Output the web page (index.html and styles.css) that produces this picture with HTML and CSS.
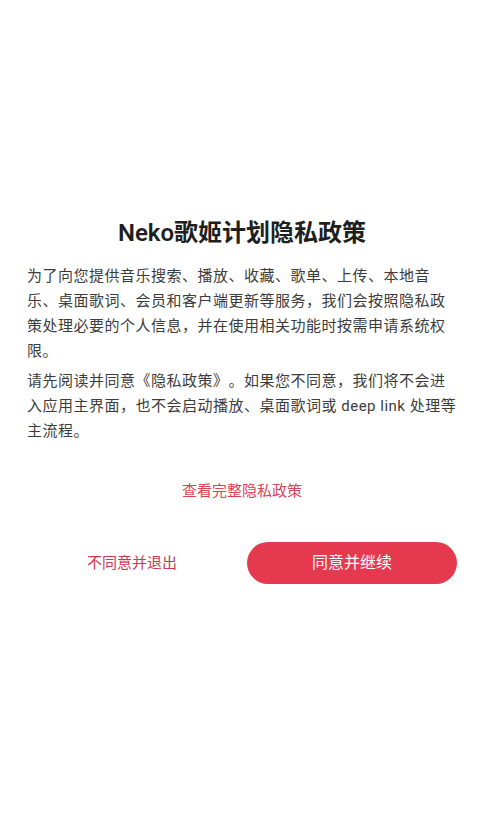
FILE: index.html
```html
<!DOCTYPE html>
<html lang="zh-CN">

<head>
    <meta charset="UTF-8">
    <meta name="viewport" content="width=device-width, initial-scale=1.0">
    <title>隐私政策</title>
    <link rel="stylesheet" href="styles.css">
</head>

<body>
    <div class="privacy">
        <h1 class="title">Neko歌姬计划隐私政策</h1>
        <p class="text">为了向您提供音乐搜索、播放、收藏、歌单、上传、本地音乐、桌面歌词、会员和客户端更新等服务，我们会按照隐私政策处理必要的个人信息，并在使用相关功能时按需申请系统权限。</p>
        <p class="text">请先阅读并同意《隐私政策》。如果您不同意，我们将不会进入应用主界面，也不会启动播放、桌面歌词或 deep link 处理等主流程。</p>
        <a class="link">查看完整隐私政策</a>
        <div class="actions">
            <span class="btn disagree">不同意并退出</span>
            <span class="btn agree">同意并继续</span>
        </div>
    </div>
</body>

</html>
```

FILE: styles.css
```css
body {
    margin: 0;
    background: #fff;
    font-family: Roboto, "Noto Sans CJK SC", sans-serif;
    text-spacing-trim: space-all;
}

.privacy {
    padding: 217px 26px 0 27px;
    display: flex;
    flex-direction: column;
}

.title {
    margin: 0;
    font-size: 24px;
    line-height: 32px;
    font-weight: 600;
    color: #1f1f1f;
    text-align: center;
}

.text {
    margin: 15px 0 0;
    font-size: 15px;
    line-height: 25px;
    letter-spacing: 0.5px;
    color: #3c3c3c;
}

.text + .text {
    margin-top: 5px;
}

.link {
    margin-top: 35px;
    font-size: 15px;
    line-height: 25px;
    color: #d9435a;
    text-align: center;
    cursor: pointer;
}

.actions {
    margin-top: 38px;
    display: flex;
    gap: 10px;
}

.btn {
    flex: 1;
    height: 42px;
    line-height: 42px;
    text-align: center;
    border-radius: 21px;
    cursor: pointer;
}

.disagree {
    font-size: 15px;
    color: #c93a50;
}

.agree {
    font-size: 16px;
    background: #e5394f;
    color: #fff;
}
```
